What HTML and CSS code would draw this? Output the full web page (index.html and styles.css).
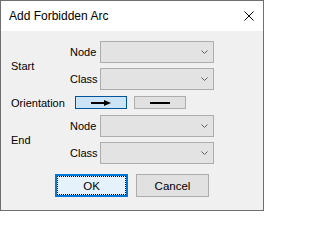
FILE: index.html
```html
<!DOCTYPE html>
<html>
<head>
<meta charset="utf-8">
<link rel="stylesheet" href="styles.css">
</head>
<body>
<div class="window">
  <div class="titlebar">
    <span class="title">Add Forbidden Arc</span>
    <svg class="close" width="10" height="10" viewBox="0 0 10 10"><path d="M0.5 0.5 L9.5 9.5 M9.5 0.5 L0.5 9.5" stroke="#000" stroke-width="1" fill="none"/></svg>
  </div>
  <div class="content">
    <div class="section">
      <div class="section-label">Start</div>
      <div class="rows">
        <div class="row"><span class="sub-label">Node</span><div class="combo"><svg width="7" height="4" viewBox="0 0 7 4"><polyline points="0.5,0.5 3.5,3.5 6.5,0.5" fill="none" stroke="#606060" stroke-width="1"/></svg></div></div>
        <div class="row"><span class="sub-label">Class</span><div class="combo"><svg width="7" height="4" viewBox="0 0 7 4"><polyline points="0.5,0.5 3.5,3.5 6.5,0.5" fill="none" stroke="#606060" stroke-width="1"/></svg></div></div>
      </div>
    </div>
    <div class="orientation">
      <div class="orient-label">Orientation</div>
      <div class="toggle pressed"><svg width="20" height="6" viewBox="0 0 20 6"><rect x="0" y="2" width="15" height="2" fill="#000"/><polygon points="13,0 20,3 13,6" fill="#000"/></svg></div>
      <div class="toggle"><svg width="20" height="6" viewBox="0 0 20 6"><rect x="0" y="2" width="20" height="2" fill="#000"/></svg></div>
    </div>
    <div class="section">
      <div class="section-label">End</div>
      <div class="rows">
        <div class="row"><span class="sub-label">Node</span><div class="combo"><svg width="7" height="4" viewBox="0 0 7 4"><polyline points="0.5,0.5 3.5,3.5 6.5,0.5" fill="none" stroke="#606060" stroke-width="1"/></svg></div></div>
        <div class="row"><span class="sub-label">Class</span><div class="combo"><svg width="7" height="4" viewBox="0 0 7 4"><polyline points="0.5,0.5 3.5,3.5 6.5,0.5" fill="none" stroke="#606060" stroke-width="1"/></svg></div></div>
      </div>
    </div>
    <div class="buttons">
      <div class="btn default">OK</div>
      <div class="btn">Cancel</div>
    </div>
  </div>
</div>
</body>
</html>
```
FILE: styles.css
```css
html, body {
  margin: 0;
  padding: 0;
}
body {
  font-family: "Liberation Sans", Arial, sans-serif;
  font-size: 11px;
  color: #000;
}
.window {
  width: 264px;
  height: 211px;
  box-sizing: border-box;
  border: 1px solid #6f6f6f;
  background: #f0f0f0;
  display: flex;
  flex-direction: column;
}
.titlebar {
  height: 30px;
  flex: none;
  background: #fff;
  display: flex;
  align-items: center;
  justify-content: space-between;
  padding: 0 9px 0 8px;
}
.title {
  font-size: 12px;
}
.close {
  display: block;
}
.content {
  padding: 10px 0 0 10px;
  display: flex;
  flex-direction: column;
}
.section {
  display: flex;
  align-items: center;
}
.section-label {
  width: 59px;
}
.rows {
  display: flex;
  flex-direction: column;
  gap: 5px;
}
.row {
  display: flex;
  align-items: center;
}
.sub-label {
  width: 30px;
}
.combo {
  width: 114px;
  height: 22px;
  box-sizing: border-box;
  border: 1px solid #adadad;
  background: #e3e3e3;
  display: flex;
  align-items: center;
  justify-content: flex-end;
  padding-right: 5px;
}
.combo svg {
  display: block;
}
.orientation {
  height: 25px;
  display: flex;
  align-items: center;
}
.orient-label {
  width: 64px;
}
.toggle {
  width: 52px;
  height: 13px;
  box-sizing: border-box;
  border: 1px solid #adadad;
  background: #e1e1e1;
  display: flex;
  align-items: center;
  justify-content: center;
  margin-right: 7px;
}
.toggle svg {
  display: block;
}
.toggle.pressed {
  border-color: #005499;
  background: #cce4f7;
}
.buttons {
  margin-top: 10px;
  margin-left: -10px;
  display: flex;
  justify-content: center;
  gap: 8px;
}
.btn {
  width: 73px;
  height: 23px;
  box-sizing: border-box;
  border: 1px solid #adadad;
  background: #e1e1e1;
  display: flex;
  align-items: center;
  justify-content: center;
  font-size: 11.5px;
}
.btn.default {
  border: 2px solid #0078d7;
  background: #e5f1fb;
  outline: 1px dotted #000;
  outline-offset: -3px;
}
```
